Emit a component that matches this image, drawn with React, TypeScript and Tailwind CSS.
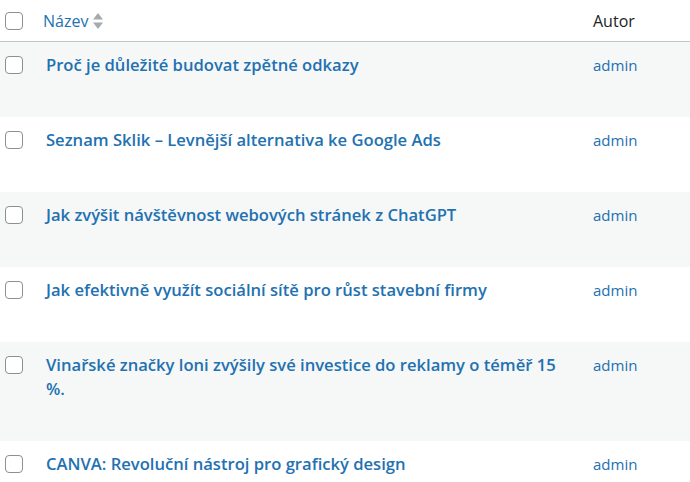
import React from 'react'

const posts = [
  'Proč je důležité budovat zpětné odkazy',
  'Seznam Sklik – Levnější alternativa ke Google Ads',
  'Jak zvýšit návštěvnost webových stránek z ChatGPT',
  'Jak efektivně využít sociální sítě pro růst stavební firmy',
  'Vinařské značky loni zvýšily své investice do reklamy o téměř 15 %.',
  'CANVA: Revoluční nástroj pro grafický design',
]

function Check() {
  return <span className="block w-[18px] h-[18px] rounded-[4px] border border-[#8c8f94] bg-white" />
}

export default function App() {
  return (
    <div className="w-[690px] h-[482px] overflow-hidden bg-white text-[#1d2327]" style={{ fontFamily: '"Open Sans", "Noto Sans", sans-serif' }}>
      <div className="flex items-center h-[42px] border-b border-[#c3c4c7]">
        <div className="w-[43px] pl-[5px] shrink-0"><Check /></div>
        <div className="w-[550px] shrink-0 flex items-center gap-[4px] text-[16px] text-[#2271b1]">
          Název
          <svg width="12" height="18" viewBox="0 0 12 18" className="mt-[1px]">
            <path d="M6 1 L11 7.5 H1 Z" fill="#a7aaad" />
            <path d="M6 17 L11 10.5 H1 Z" fill="#a7aaad" />
          </svg>
        </div>
        <div className="text-[16px]">Autor</div>
      </div>
      {posts.map((t, i) => (
        <div key={t} className={'flex pt-[11px] pb-[40px] ' + (i % 2 === 0 ? 'bg-[#f6f7f7]' : 'bg-white')}>
          <div className="w-[46px] pl-[5px] pt-[3px] shrink-0"><Check /></div>
          <div className="w-[547px] shrink-0 pr-[27px]">
            <a className="text-[16.6px] leading-[24px] font-semibold text-[#2271b1]">{t}</a>
          </div>
          <div className="text-[15px] leading-[24px] text-[#2271b1]">admin</div>
        </div>
      ))}
    </div>
  )
}
